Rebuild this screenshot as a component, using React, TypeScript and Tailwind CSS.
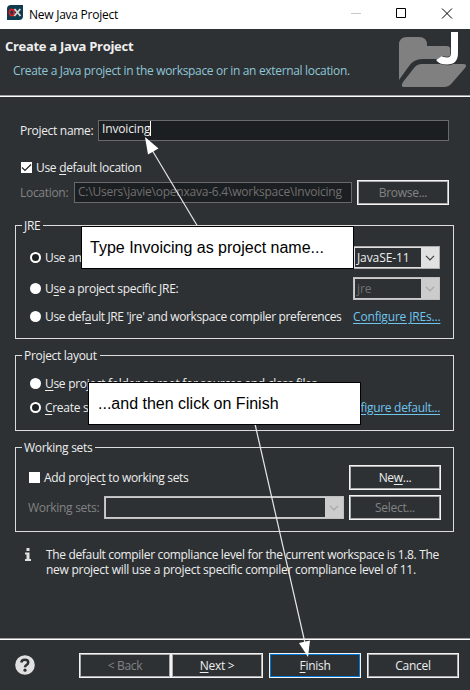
import React from "react";

type Kids = { children?: React.ReactNode; className?: string };

// Underlined mnemonic letter
const U = ({ children }: Kids) => (
  <span className="underline decoration-1 underline-offset-2">{children}</span>
);

const Text = ({ children, className = "" }: Kids) => (
  <span className={`whitespace-nowrap ${className}`}>{children}</span>
);

const Button = ({
  children,
  disabled,
  primary,
}: {
  children: React.ReactNode;
  disabled?: boolean;
  primary?: boolean;
}) => (
  <button
    className={`h-[25px] w-[92px] shrink-0 border border-[#f4f4f4] bg-[#2d3134] ${disabled ? "text-[#838383]" : "text-[#eeeeee]"}`}
  >
    <span
      className={`flex h-full items-center justify-center border pt-px whitespace-nowrap ${primary ? "border-[#0078d7]" : "border-[#adadad]"}`}
    >
      <span>{children}</span>
    </span>
  </button>
);

const Chevron = ({ color }: { color: string }) => (
  <svg width="10" height="6" viewBox="0 0 10 6" fill="none" stroke={color} strokeWidth="1.2">
    <path d="M1 0.8 5 4.8 9 0.8" />
  </svg>
);

const Combo = ({ children, className, disabled }: Kids & { disabled?: boolean }) => (
  <div
    className={`flex h-[23px] shrink-0 border ${disabled ? "border-[#bfbfbf] bg-[#cccccc] text-[#707070]" : "border-[#adadad] bg-[#e1e1e1] text-[#eeeeee]"} ${className}`}
  >
    <div className="my-px ml-px flex flex-1 items-center bg-[#2d3134] pl-[2px]">
      <Text className="tracking-[-0.1px]">{children}</Text>
    </div>
    <div className="flex w-[18px] items-center justify-center">
      <Chevron color={disabled ? "#a5a5a5" : "#404040"} />
    </div>
  </div>
);

const Radio = ({ checked }: { checked?: boolean }) => (
  <span
    className={`size-[11px] shrink-0 rounded-full ${checked ? "border-[2.5px] border-white bg-[#1c1f21]" : "bg-white"}`}
  />
);

const Group = ({ title, children, className }: Kids & { title: string }) => (
  <fieldset className={`mx-[15px] w-[439px] border border-[#dcdcdc] ${className}`}>
    <legend className="ml-[6px] h-[17px] pr-[3px] pl-[2px] leading-[18px] whitespace-nowrap">{title}</legend>
    {children}
  </fieldset>
);

const Link = ({ children, className = "" }: Kids) => (
  <a className={`text-[#6fc5ee] underline decoration-1 underline-offset-2 ${className}`}>
    <Text>{children}</Text>
  </a>
);

export default function App() {
  return (
    <div className="relative flex h-[690px] w-[470px] flex-col overflow-hidden bg-[#2d3134] font-['Open_Sans',sans-serif] text-[12px] leading-[16px] tracking-[-0.3px] text-[#eeeeee]">
      <div className="flex h-[29px] items-center bg-white text-black">
        <svg className="mb-[3px] ml-[7px] shrink-0" width="16" height="16" viewBox="0 0 16 16">
          <path d="M4 0H16V11Q16 15 12 15H0V4Q0 0 4 0Z" fill="#0e3c4e" />
          <ellipse cx="4.8" cy="7.5" rx="2.3" ry="3.2" fill="none" stroke="#e01b22" strokeWidth="1.8" />
          <path d="M7.5 4 13.5 11M13.3 4 7.3 11" stroke="#d5d5d0" strokeWidth="1.9" />
        </svg>
        <Text className="ml-[6px] tracking-[-0.25px]">New Java Project</Text>
        <svg className="mb-px ml-auto" width="119" height="28" viewBox="0 0 119 28" fill="none">
          <path d="M0 13.5H10" stroke="#c8c8c8" />
          <path d="M45.5 8.5H54.5V17.5H45.5Z" stroke="#000" />
          <path d="M91 8.500 101 18.500M101 8.500 91 18.500" stroke="#000" />
        </svg>
      </div>

      <div className="flex h-[68px] justify-between border-b border-white">
        <div className="flex flex-1 justify-between border-b border-[#a0a0a0]">
          <div className="flex flex-col pl-[5px]">
            <Text className="mt-[9px] text-[13px] font-bold">Create a Java Project</Text>
            <Text className="mt-[9px] ml-[8px] tracking-[-0.33px] text-[#8fc6d6]">
              Create a Java project in the workspace or in an external location.
            </Text>
          </div>
          <svg className="mt-[3px] mr-[2px]" width="70" height="58" viewBox="0 0 70 58">
            <path d="M1 48V13Q1 5 9 5H21Q29 5 29 13V14H48Q53 14 53 19V27H24Q16 27 11 34Z" fill="#808080" />
            <path d="M24 32H65Q70 32 67 36L54 51Q51 55 46 55H6Q2 55 5 50L16 36Q19 32 24 32Z" fill="#808080" />
            <path d="M56.5 0V21Q56.5 29 49 29Q43 29 41 26" fill="none" stroke="#2d3134" strokeWidth="8.500" />
            <path d="M56.5 0V21Q56.5 29 49 29Q43 29 41 26" fill="none" stroke="#fff" strokeWidth="7" />
          </svg>
        </div>
      </div>

      <div className="mt-[23px] flex h-[21px] items-center pl-[20px]">
        <Text className="w-[78px] pt-px">Project name:</Text>
        <div className="flex h-[21px] w-[351px] border border-[#696969] bg-[#1c1f21] pl-[3px]">
          <Text className="tracking-[-0.15px]">Invoicing</Text>
          <span className="h-[15px] w-px bg-white" />
        </div>
      </div>

      <div className="mt-[18px] flex h-[16px] items-center gap-[4px] pl-[21px]">
        <svg width="11" height="11" viewBox="0 0 11 11">
          <path d="M0 0H11V11H0Z" fill="#fff" />
          <path d="M1 5.5 4 8.5 10 2.5" fill="none" stroke="#222" strokeWidth="1.2" />
        </svg>
        <Text className="pt-px">Use <U>d</U>efault location</Text>
      </div>

      <div className="mt-[5px] flex h-[25px] items-center pl-[20px] text-[#838383]">
        <Text className="w-[54px] pt-px">Location:</Text>
        <div className="mr-[5px] flex h-[21px] w-[278px] border border-[#696969] bg-[#1c1f21] pt-px pl-[3px] text-[#707070]">
          <Text className="tracking-[-0.23px]">C:\Users\javie\openxava-6.4\workspace\Invoicing</Text>
        </div>
        <Button disabled>Browse...</Button>
      </div>

      <Group title="JRE" className="mt-[12px] h-[122px]">
        <div className="mt-[12px] flex h-[23px] items-center pl-[14px]">
          <Radio checked />
          <Text className="ml-[4px] w-[308px]">Use an execution environment JRE:</Text>
          <Combo className="w-[87px]">JavaSE-11</Combo>
        </div>
        <div className="mt-[8px] flex h-[23px] items-center pl-[14px]">
          <Radio />
          <Text className="ml-[4px] w-[308px]">U<U>s</U>e a project specific JRE:</Text>
          <Combo className="w-[87px]" disabled>jre</Combo>
        </div>
        <div className="mt-[8px] flex h-[16px] items-center pl-[14px]">
          <Radio />
          <Text className="ml-[4px] w-[308px] pt-px tracking-[-0.37px]">
            Use def<U>a</U>ult JRE 'jre' and workspace compiler preferences
          </Text>
          <Link className="pt-px tracking-[-0.17px]">Configure JREs...</Link>
        </div>
      </Group>

      <Group title="Project layout" className="mt-[8px] h-[84px]">
        <div className="mt-[11px] flex h-[16px] items-center pl-[14px]">
          <Radio />
          <Text className="ml-[4px] pt-px"><U>U</U>se project folder as root for sources and class files</Text>
        </div>
        <div className="mt-[8px] flex h-[16px] items-center pl-[14px]">
          <Radio checked />
          <Text className="ml-[4px] pt-px"><U>C</U>reate separate folders for sources</Text>
          <Link className="mr-[13px] ml-auto pt-px">Configure default...</Link>
        </div>
      </Group>

      <Group title="Working sets" className="mt-[8px] h-[93px]">
        <div className="mt-[9px] flex h-[25px] items-center pl-[12px]">
          <span className="ml-px size-[11px] bg-white" />
          <Text className="ml-[4px] w-[305px]">Add projec<U>t</U> to working sets</Text>
          <Button>Ne<U>w</U>...</Button>
        </div>
        <div className="mt-[5px] flex h-[25px] items-center pl-[12px] text-[#838383]">
          <Text className="w-[76px] pt-px">Working sets:</Text>
          <Combo className="mr-[5px] w-[240px]" disabled />
          <Button disabled>Select...</Button>
        </div>
      </Group>

      <div className="mt-[15px] flex">
        <svg className="ml-[24px] w-[22px]" width="22" height="15" viewBox="0 0 22 15">
          <path d="M2.500 1H5.500V4H2.500ZM1 5.500H5.500V12H7V14H1V12H2.500V7.500H1Z" fill="#e0e0e0" />
        </svg>
        <p className="leading-[15px] tracking-[-0.34px] whitespace-nowrap">
          The default compiler compliance level for the current workspace is 1.8. The
          <br />
          <span className="tracking-[-0.27px]">
            new project will use a project specific compiler compliance level of 11.
          </span>
        </p>
      </div>

      <div className="mt-auto flex h-[52px] border-t border-[#a0a0a0]">
        <div className="flex flex-1 border-t border-white pt-[13px] pr-[11px]">
          <svg className="mt-[2px] ml-[15px]" width="20" height="20" viewBox="0 0 20 20">
            <circle cx="10" cy="10" r="9.8" fill="#e0e0e0" />
            <path d="M6.5 7.500Q6.500 4.800 10 4.800T13.200 7.600Q13.200 9 11.500 10Q10 11 10 12.300" fill="none" stroke="#2d3134" strokeWidth="2.6" />
            <circle cx="10" cy="15.2" r="1.6" fill="#2d3134" />
          </svg>
          <div className="ml-auto flex">
            <Button disabled>&lt; Back</Button>
            <Button><U>N</U>ext &gt;</Button>
            <span className="w-[6px]" />
            <Button primary><U>F</U>inish</Button>
            <span className="w-[6px]" />
            <Button>Cancel</Button>
          </div>
        </div>
      </div>

      {/* Annotation arrows and callouts over the dialog */}
      <svg className="pointer-events-none absolute inset-0" width="470" height="690" viewBox="0 0 470 690">
        <g stroke="#e6e6e6" strokeWidth="1.2" fill="#fff">
          <path d="M198 227 152 150" />
          <path d="M255 424 305 643" />
        </g>
        <path d="M145 137 158.500 148.500 148 154.500Z" fill="#fff" />
        <path d="M308 657 299 643 310 640.500Z" fill="#fff" />
      </svg>
      <div className="absolute top-[226px] left-[81px] flex h-[43px] w-[273px] items-center border border-black bg-white pt-px pl-[8px] font-['Liberation_Sans',sans-serif] text-[16px] tracking-normal text-black">
        <Text>Type Invoicing as project name...</Text>
      </div>
      <div className="absolute top-[382px] left-[88px] flex h-[43px] w-[273px] items-center border border-black bg-white pl-[9px] font-['Liberation_Sans',sans-serif] text-[16px] tracking-normal text-black">
        <Text>...and then click on Finish</Text>
      </div>
    </div>
  );
}
